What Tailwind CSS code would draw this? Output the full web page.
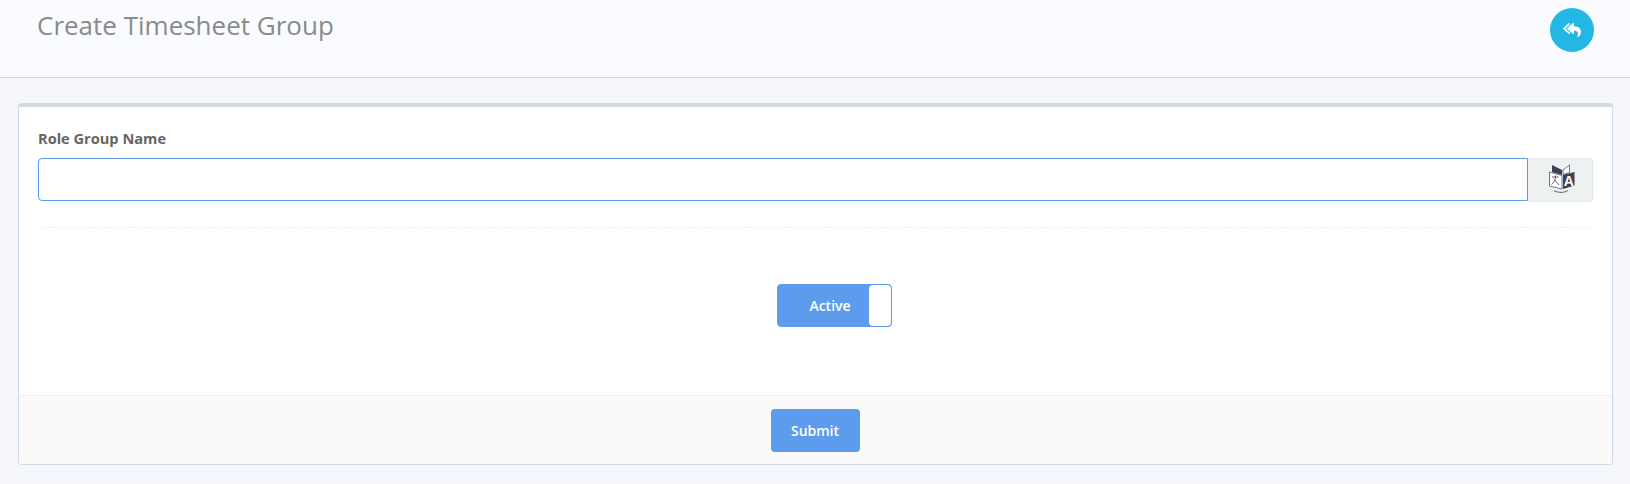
<!DOCTYPE html>
<html>
<head>
<meta charset="utf-8">
<script src="https://cdn.jsdelivr.net/npm/@tailwindcss/browser@4"></script>
</head>
<body class="bg-[#f4f6fb] font-['Open_Sans',sans-serif] overflow-hidden">
<div class="w-[1630px] h-[484px]">
  <header class="h-[78px] bg-[#fafbfe] border-b border-[#cfdbe2] flex justify-between pl-[37px] pr-[36px]">
    <h1 class="text-[26px] leading-[36px] text-[#8a8a8a] mt-[7px]">Create Timesheet Group</h1>
    <a class="w-[44px] h-[44px] mt-[8px] rounded-full bg-[#23b7e5] flex items-center justify-center">
      <svg width="18" height="16" viewBox="0 0 576 512" fill="#fff">
        <path d="M136.309 189.836L312.313 37.851C327.72 24.546 352 35.348 352 56.015v82.763c129.182 10.231 224 52.212 224 183.548 0 61.441-39.582 122.309-83.333 154.132-13.653 9.931-33.111-2.533-28.077-18.631 38.512-123.162-3.922-169.482-112.59-182.015v84.175c0 20.701-24.3 31.453-39.687 18.164L136.309 226.164c-11.071-9.561-11.086-26.753 0-36.328zm-128 36.328L184.313 378.15C199.7 391.439 224 380.687 224 359.986v-15.818l-108.606-93.785A55.96 55.96 0 0 1 96 207.998a55.953 55.953 0 0 1 19.393-42.38L224 71.833V56.015c0-20.667-24.28-31.469-39.687-18.164L8.309 189.836c-11.086 9.575-11.071 26.767 0 36.328z"/>
      </svg>
    </a>
  </header>
  <main class="mx-[18px] mt-[25px] w-[1595px] h-[362px] bg-white rounded-[4px] border border-[#cfdbe2] border-t-[4px] flex flex-col">
    <div class="flex-1 px-[19px] pt-[21px] min-h-0">
      <label class="block text-[14.6px] leading-[20px] font-bold text-[#656565]">Role Group Name</label>
      <div class="flex mt-[10px]">
        <input type="text" class="flex-1 h-[43px] bg-white border border-[#5d9cec] rounded-l-[4px] outline-none">
        <span class="w-[65px] h-[44px] bg-[#edf1f2] border border-l-0 border-[#e4eaec] rounded-r-[4px] flex items-center justify-center pl-[3px] pb-[3px]">
          <svg width="28" height="30" viewBox="0 0 28 30">
            <path d="M1.5 8 L14 11.5 V25 L1.5 22 Z" fill="#fff" stroke="#3a3f51" stroke-width="0.7"/>
            <path d="M15 11 L26.5 8 V21.5 L15 25 Z" fill="#3a3f51"/>
            <path d="M4 1 L14 6 V11 L4 8 Z" fill="#3a3f51"/>
            <path d="M15 6 L21.5 1 V8.5 L15 10.5 Z" fill="#fff" stroke="#3a3f51" stroke-width="0.7"/>
            <text x="20.7" y="21.5" font-family="Liberation Sans" font-size="14" font-weight="700" fill="#fff" text-anchor="middle">A</text>
            <path d="M4 13 H10.5 M7.5 11.5 C7.5 15.5 6.5 18.5 3.5 20.5 M6.5 15.5 L11 21" fill="none" stroke="#3a3f51" stroke-width="0.8"/>
            <path d="M6 26.5 C10 29 16 29 20 26.5" fill="none" stroke="#3a3f51" stroke-width="0.8"/>
          </svg>
        </span>
      </div>
      <div class="mt-[25px] border-t border-dashed border-[#eef1f2]"></div>
      <div class="flex justify-center mt-[56px] pl-[38px]">
        <div class="w-[115px] h-[43px] rounded-[4px] bg-[#5d9cec] border border-[#5d9cec] flex">
          <span class="flex-1 flex items-center justify-center pl-[13px] text-[14px] font-semibold text-white">Active</span>
          <span class="w-[22px] bg-white rounded-[4px]"></span>
        </div>
      </div>
    </div>
    <div class="h-[69px] bg-[#fafafa] border-t border-[#eef1f2] rounded-b-[4px] flex justify-center pt-[13px] pr-[1px]">
      <button class="w-[89px] h-[43px] rounded-[4px] bg-[#5d9cec] text-white text-[14px] font-semibold">Submit</button>
    </div>
  </main>
</div>
</body>
</html>
